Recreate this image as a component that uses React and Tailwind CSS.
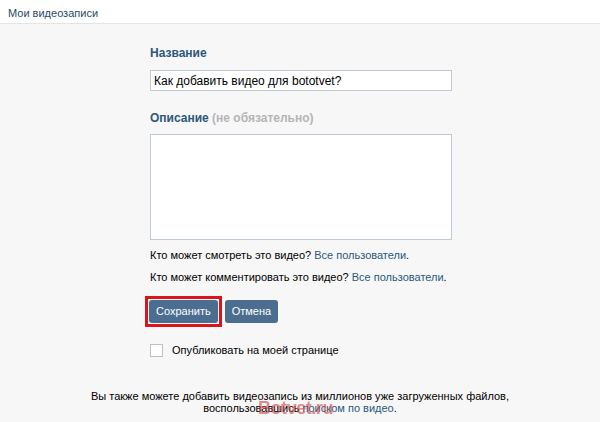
export default function App() {
  return (
    <div
      className="w-[600px] h-[422px] bg-[#f7f7f7] overflow-hidden text-[11px] text-[#000]"
      style={{ fontFamily: 'Tahoma, "Liberation Sans", "DejaVu Sans", sans-serif' }}
    >
      <header className="h-[24px] bg-white border-b border-[#e4e4e4] px-[8px] flex items-end pb-[4px]">
        <span className="text-[#2b4a66] text-[11px] leading-none">Мои видеозаписи</span>
      </header>

      <main className="pl-[150px] pt-[22px] flex flex-col">
        <label className="text-[#2b587a] font-bold text-[12px] leading-[14px]">Название</label>
        <input
          className="mt-[10px] w-[302px] h-[21px] bg-white border border-[#c0cad5] px-[3px] text-[12px] text-black outline-none"
          defaultValue="Как добавить видео для bototvet?"
        />

        <label className="mt-[20px] font-bold text-[12px] leading-[14px] text-[#2b587a]">
          Описание <span className="text-[#b5b5b5]">(не обязательно)</span>
        </label>
        <textarea className="mt-[9px] w-[302px] h-[106px] bg-white border border-[#c0cad5] resize-none outline-none" />

        <p className="mt-[8px] leading-[14px]">
          Кто может смотреть это видео? <a className="text-[#2b587a]">Все пользователи</a>.
        </p>
        <p className="mt-[8px] leading-[14px]">
          Кто может комментировать это видео? <a className="text-[#2b587a]">Все пользователи</a>.
        </p>

        <div className="mt-[12px] -ml-[5px] flex items-center gap-[3px]">
          <div className="border-[3px] border-[#d9141b] p-[1px]">
            <button className="h-[23px] px-[7px] bg-[#4a6d90] text-white rounded-[3px] text-[11px]">Сохранить</button>
          </div>
          <button className="h-[23px] px-[7px] bg-[#4a6d90] text-white rounded-[3px] text-[11px]">Отмена</button>
        </div>

        <div className="mt-[15px] flex items-center gap-[9px]">
          <span className="w-[13px] h-[13px] bg-white border border-[#c0c0c0]" />
          <span>Опубликовать на моей странице</span>
        </div>
      </main>

      <div className="relative mt-[31px] text-center leading-[12px]">
        <p>Вы также можете добавить видеозапись из миллионов уже загруженных файлов,</p>
        <p>
          воспользовавшись <a className="text-[#2b587a]">поиском по видео</a>.
        </p>
        <span className="absolute left-[258px] top-[9px] text-[18px] font-bold leading-none text-[#c94545]/60 tracking-tight">
          Botvet.ru
        </span>
      </div>
    </div>
  );
}
